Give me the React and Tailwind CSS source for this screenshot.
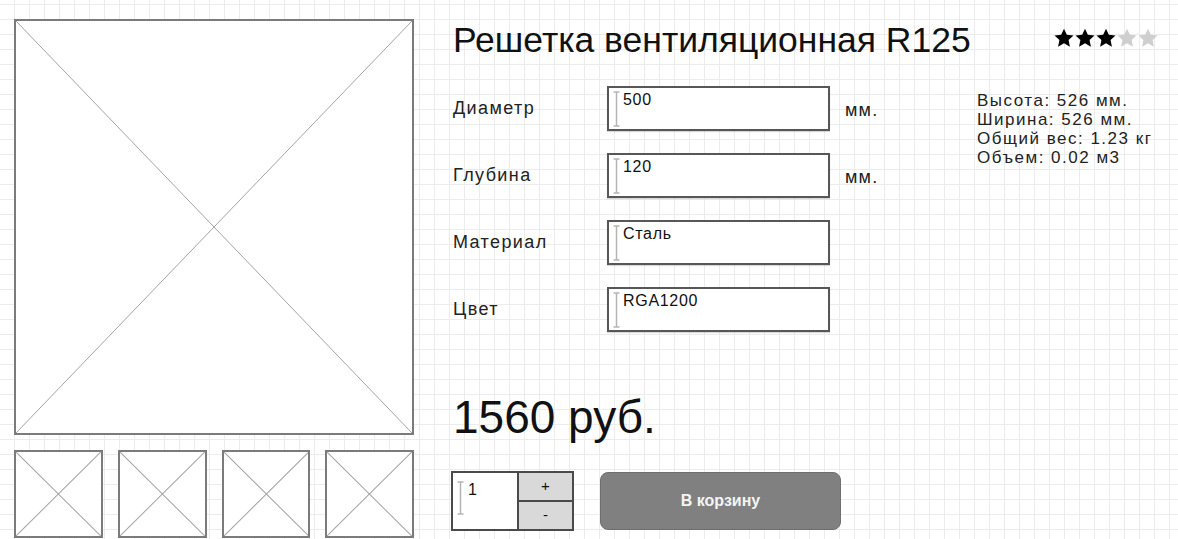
import { useState } from 'react';

const FIELDS = [
  { label: 'Диаметр', value: '500', unit: 'мм.' },
  { label: 'Глубина', value: '120', unit: 'мм.' },
  { label: 'Материал', value: 'Сталь' },
  { label: 'Цвет', value: 'RGA1200' },
];

const SPECS = ['Высота: 526 мм.', 'Ширина: 526 мм.', 'Общий вес: 1.23 кг', 'Объем: 0.02 м3'];

// Placeholder box with a cross through it
function ImagePlaceholder({ className = '' }) {
  return (
    <div className={`relative border-2 border-[#7b7b7b] bg-white ${className}`}>
      <svg className="absolute inset-0 h-full w-full" preserveAspectRatio="none" viewBox="0 0 100 100">
        <line x1="0" y1="0" x2="100" y2="100" stroke="#a3a3a3" strokeWidth="1" vectorEffect="non-scaling-stroke" />
        <line x1="100" y1="0" x2="0" y2="100" stroke="#a3a3a3" strokeWidth="1" vectorEffect="non-scaling-stroke" />
      </svg>
    </div>
  );
}

// Grey text cursor drawn at the start of each field
function Caret({ height = 36 }) {
  return (
    <svg width="7" height={height} viewBox={`0 0 7 ${height}`} className="shrink-0">
      <line x1="3.5" y1="1" x2="3.5" y2={height - 1} stroke="#b4b4b4" strokeWidth="1.5" />
      <line x1="0.5" y1="1" x2="6.5" y2="1" stroke="#b4b4b4" strokeWidth="1.5" />
      <line x1="0.5" y1={height - 1} x2="6.5" y2={height - 1} stroke="#b4b4b4" strokeWidth="1.5" />
    </svg>
  );
}

function Star({ filled }) {
  return (
    <svg width="20" height="20" viewBox="0 0 24 24">
      <path
        d="M12 0.8l3.4 7.3 8 .9-5.9 5.5 1.6 7.9L12 18.4 4.9 22.4l1.6-7.9L.6 9l8-.9z"
        fill={filled ? '#000000' : '#cfcfcf'}
      />
    </svg>
  );
}

function Field({ label, value, unit }) {
  return (
    <div className="flex items-center">
      <span className="w-[154px] text-[18px] tracking-[1.4px] text-[#222]">{label}</span>
      <div className="flex h-[45px] w-[223px] items-start gap-[3px] border-2 border-[#575757] bg-white pl-[4px] pt-[3px] shadow-[0_1px_1px_rgba(0,0,0,0.15)]">
        <Caret />
        <span className="text-[16px] leading-[18px] tracking-[0.7px] text-[#111]">{value}</span>
      </div>
      {unit && <span className="ml-[15px] pt-[3px] text-[18px] tracking-[1.2px] text-[#222]">{unit}</span>}
    </div>
  );
}

function QuantityStepper() {
  const [qty, setQty] = useState(1);

  return (
    <div className="flex h-[60px] w-[123px] border-2 border-[#4a4a4a] bg-white">
      <div className="flex flex-1 items-start gap-[4px] pl-[4px] pt-[8px]">
        <Caret height={34} />
        <span className="text-[16px] leading-[18px] text-[#111]">{qty}</span>
      </div>
      <div className="flex w-[55px] flex-col border-l-2 border-[#4a4a4a]">
        <button
          onClick={() => setQty(qty + 1)}
          className="flex flex-1 items-center justify-center border-b-2 border-[#4a4a4a] bg-[#d9d9d9] text-[15px] text-[#111]"
        >
          +
        </button>
        <button
          onClick={() => setQty(Math.max(1, qty - 1))}
          className="flex flex-1 items-center justify-center bg-[#d9d9d9] text-[15px] text-[#111]"
        >
          -
        </button>
      </div>
    </div>
  );
}

export default function App() {
  return (
    <div className="h-[539px] w-[1178px] overflow-hidden bg-white bg-[linear-gradient(to_right,#ececec_1px,transparent_1px),linear-gradient(to_bottom,#ececec_1px,transparent_1px)] bg-[size:15px_15px] bg-[position:14px_4px] font-['Liberation_Sans',Arial,sans-serif]">
      <div className="flex">
        {/* Gallery */}
        <div className="ml-[14px] mt-[19px] flex w-[400px] flex-col gap-[15px]">
          <ImagePlaceholder className="h-[416px]" />
          <div className="grid grid-cols-4 gap-[15px]">
            {[0, 1, 2, 3].map((i) => (
              <ImagePlaceholder key={i} className="h-[88px]" />
            ))}
          </div>
        </div>

        {/* Product info */}
        <div className="ml-[39px] flex flex-1 flex-col pr-[20px]">
          <div className="mt-[20px] flex items-start justify-between">
            <h1 className="text-[35.5px] leading-[40px] text-[#111]">Решетка вентиляционная R125</h1>
            <div className="mt-[8px] flex gap-[1px]">
              {[1, 2, 3, 4, 5].map((n) => (
                <Star key={n} filled={n <= 3} />
              ))}
            </div>
          </div>

          <div className="mt-[26px] flex">
            <div className="flex w-[524px] flex-col gap-[22px]">
              {FIELDS.map((f) => (
                <Field key={f.label} {...f} />
              ))}
            </div>
            <div className="pt-[5px] text-[17px] leading-[19px] tracking-[1.5px] text-[#222]">
              {SPECS.map((s) => (
                <div key={s}>{s}</div>
              ))}
            </div>
          </div>

          <div className="mt-[60px] text-[46px] leading-[50px] text-[#111]">1560 руб.</div>

          <div className="mt-[29px] flex items-center">
            <div className="-ml-[2px]">
              <QuantityStepper />
            </div>
            <button className="ml-[26px] h-[58px] w-[241px] rounded-[8px] border border-[#6f6f6f] bg-[#808080] text-[16px] font-bold text-[#f4f4f4]">
              В корзину
            </button>
          </div>
        </div>
      </div>
    </div>
  );
}
